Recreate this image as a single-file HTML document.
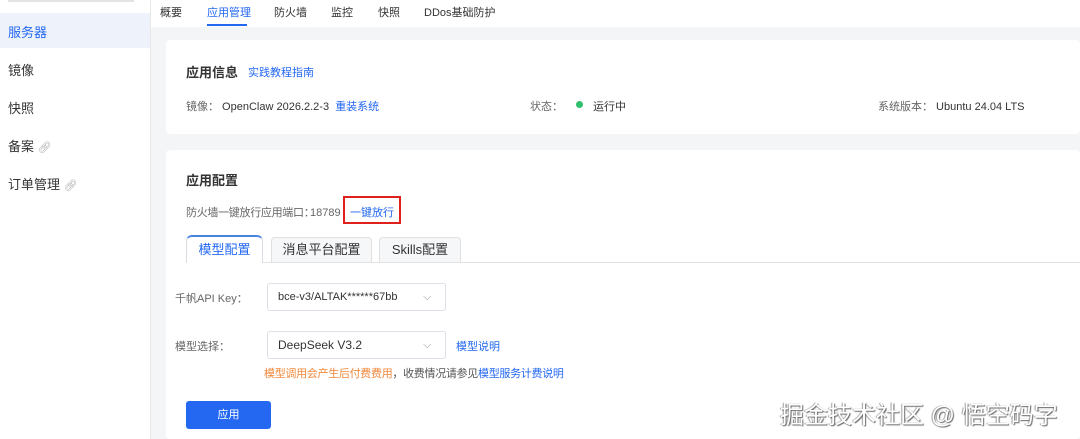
<!DOCTYPE html>
<html><head><meta charset="utf-8"><style>
*{margin:0;padding:0;box-sizing:border-box}
body{width:1080px;height:439px;overflow:hidden;background:#f4f5f7;font-family:"Liberation Sans","Noto Sans CJK SC",sans-serif;color:#333;font-size:12px;position:relative}
.a{position:absolute;white-space:nowrap}
.side{position:absolute;left:0;top:0;width:151px;height:439px;background:#fff;border-right:1px solid #e8e8e8}
.blue{color:#2468f2}
.gray{color:#666}
</style></head><body>
<div class="side">
<div class="a" style="left:8px;top:0;width:126px;height:2px;background:#e4e4e4"></div>
<div class="a" style="left:0;top:13px;width:150px;height:35px;background:#eef3fb"></div>
<div class="a blue" style="left:8px;top:22px;font-size:13px">服务器</div>
<div class="a" style="left:8px;top:60px;font-size:13px">镜像</div>
<div class="a" style="left:8px;top:98px;font-size:13px">快照</div>
<div class="a" style="left:8px;top:136px;font-size:13px">备案 <span style="color:#aaa;font-size:11px">🔗︎</span></div>
<div class="a" style="left:8px;top:174px;font-size:13px">订单管理 <span style="color:#aaa;font-size:11px">🔗︎</span></div>
</div>
<div class="a" style="left:151px;top:0;width:929px;height:27px;background:#fff"></div>
<div class="a" style="left:160px;top:4px;font-size:11px">概要</div>
<div class="a blue" style="left:207px;top:4px;font-size:11px">应用管理</div>
<div class="a" style="left:207px;top:24px;width:40px;height:2px;background:#2468f2"></div>
<div class="a" style="left:274px;top:4px;font-size:11px">防火墙</div>
<div class="a" style="left:331px;top:4px;font-size:11px">监控</div>
<div class="a" style="left:378px;top:4px;font-size:11px">快照</div>
<div class="a" style="left:424px;top:4px;font-size:11px">DDos基础防护</div>

<div class="a" style="left:166px;top:40px;width:914px;height:94px;background:#fff;border-radius:4px"></div>
<div class="a" style="left:186px;top:62px;font-size:13px;font-weight:bold">应用信息</div>
<div class="a blue" style="left:248px;top:64px;font-size:11px">实践教程指南</div>
<div class="a" style="left:186px;top:98px;font-size:11px"><span class="gray">镜像：</span> OpenClaw 2026.2.2-3 &nbsp;<span class="blue">重装系统</span></div>
<div class="a gray" style="left:530px;top:98px;font-size:11px">状态：</div>
<div class="a" style="left:576px;top:101px;width:7px;height:7px;border-radius:50%;background:#30bf6a"></div>
<div class="a" style="left:593px;top:98px;font-size:11px">运行中</div>
<div class="a" style="left:878px;top:98px;font-size:11px"><span class="gray">系统版本：</span> Ubuntu 24.04 LTS</div>

<div class="a" style="left:166px;top:150px;width:914px;height:289px;background:#fff;border-radius:4px"></div>
<div class="a" style="left:186px;top:170px;font-size:13px;font-weight:bold">应用配置</div>
<div class="a gray" style="left:186px;top:205px;font-size:11px;line-height:16px;letter-spacing:-0.3px">防火墙一键放行应用端口：</div>
<div class="a gray" style="left:310px;top:205px;font-size:11px;line-height:16px">18789</div>
<div class="a blue" style="left:350px;top:205px;font-size:11px;line-height:16px">一键放行</div>
<div class="a" style="left:343px;top:196px;width:58px;height:28px;border:2px solid #e0201b"></div>

<div class="a" style="left:263px;top:262px;width:817px;height:1px;background:#e3e3e3"></div>
<div class="a blue" style="left:186px;top:235px;width:77px;height:28px;background:#fff;border:1px solid #d9dde3;border-top:2px solid #4a83e0;border-bottom:none;border-radius:6px 6px 0 0;text-align:center;line-height:25px;font-size:13px">模型配置</div>
<div class="a" style="left:271px;top:237px;width:101px;height:25px;background:#f6f7f9;border:1px solid #e0e0e0;border-bottom:none;border-radius:4px 4px 0 0;text-align:center;line-height:24px;font-size:13px">消息平台配置</div>
<div class="a" style="left:379px;top:237px;width:82px;height:25px;background:#f6f7f9;border:1px solid #e0e0e0;border-bottom:none;border-radius:4px 4px 0 0;text-align:center;line-height:24px;font-size:13px">Skills配置</div>

<div class="a gray" style="left:175px;top:290px;font-size:11px">千帆API Key：</div>
<div class="a" style="left:267px;top:283px;width:179px;height:28px;border:1px solid #dcdfe6;border-radius:3px;font-size:11px;line-height:26px;padding-left:10px">bce-v3/ALTAK******67bb<span class="a" style="left:155px;top:0;color:#999">⌵</span></div>
<div class="a gray" style="left:175px;top:338px;font-size:11px">模型选择：</div>
<div class="a" style="left:267px;top:331px;width:179px;height:28px;border:1px solid #dcdfe6;border-radius:3px;font-size:12px;line-height:26px;padding-left:10px">DeepSeek V3.2<span class="a" style="left:155px;top:0;color:#999;font-size:11px">⌵</span></div>
<div class="a blue" style="left:456px;top:338px;font-size:11px">模型说明</div>
<div class="a" style="left:264px;top:365px;font-size:11px;color:#555;letter-spacing:-0.3px"><span style="color:#f0883a">模型调用会产生后付费费用</span>，收费情况请参见<span class="blue">模型服务计费说明</span></div>
<div class="a" style="left:186px;top:401px;width:85px;height:28px;background:#2468f2;border-radius:3px;color:#fff;text-align:center;line-height:28px;font-size:11px">应用</div>

<div class="a" style="left:780px;top:395px;font-size:24px;color:#fff;text-shadow:1px 1px 1px #666,-1px 0 1px #999">掘金技术社区 @ 悟空码字</div>
</body></html>
